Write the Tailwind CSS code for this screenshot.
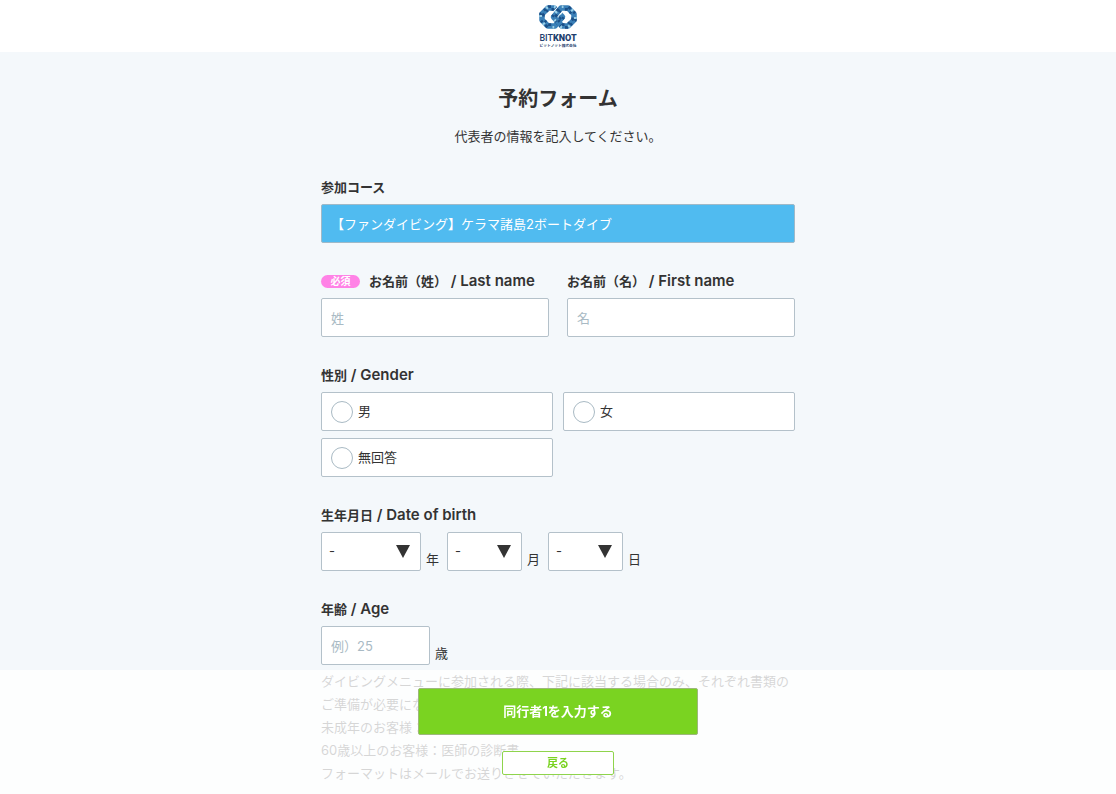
<!DOCTYPE html>
<html lang="ja">
  <head>
    <meta charset="UTF-8" />
    <meta name="viewport" content="width=device-width, initial-scale=1.0" />
    <script src="https://cdn.jsdelivr.net/npm/@tailwindcss/browser@4"></script>
    <title>予約フォーム</title>
  </head>
  <body class="min-h-screen bg-[#f4f8fb] font-[Inter,'Noto_Sans_CJK_JP',sans-serif] text-[13px] leading-[23px] text-[#333]">

    <header class="flex h-[52px] justify-center bg-white pt-1">
      <a href="#" aria-label="BITKNOT ビットノット株式会社">
        <svg class="h-11 w-10" viewBox="0 0 40 44">
          <!-- knot -->
          <g fill="none" stroke-linejoin="round">
            <path stroke="#3a80b8" stroke-width="5.500" d="M10 4 H16 L24.500 13 L17 22 H10 L4 16 V10 Z" />
            <path stroke="#1b4f87" stroke-width="2.800" stroke-dasharray="3 4 2 5" d="M10 2.700 H16.500 L26 13 L17.500 23.300 H9.500 L2.700 16.500 V9.500 Z" />
            <path stroke="#1b4f87" stroke-width="2.800" stroke-dasharray="2 5 3 3" stroke-dashoffset="4" d="M10.500 5.400 H15.500 L23 13 L16.500 20.600 H10.500 L5.400 15.500 V10.500 Z" />
            <path stroke="#9bd0e8" stroke-width="2.800" stroke-dasharray="2 9 2 7" stroke-dashoffset="5" d="M10 2.700 H16.500 L26 13 L17.500 23.300 H9.500 L2.700 16.500 V9.500 Z" />
            <path stroke="#fff" stroke-width="7.500" d="M15 13 L22 5.500" />
            <path stroke="#3a80b8" stroke-width="5.500" d="M30 22 H24 L15.500 13 L23 4 H30 L36 10 V16 Z" />
            <path stroke="#1b4f87" stroke-width="2.800" stroke-dasharray="3 4 2 5" d="M30 23.300 H23.500 L14 13 L22.500 2.700 H30.500 L37.300 9.500 V16.500 Z" />
            <path stroke="#1b4f87" stroke-width="2.800" stroke-dasharray="2 5 3 3" stroke-dashoffset="4" d="M29.500 20.600 H24.500 L17 13 L23.500 5.400 H29.500 L34.600 10.500 V15.500 Z" />
            <path stroke="#9bd0e8" stroke-width="2.800" stroke-dasharray="2 9 2 7" stroke-dashoffset="5" d="M30 23.300 H23.500 L14 13 L22.500 2.700 H30.500 L37.300 9.500 V16.500 Z" />
          </g>
          <text x="20" y="37" text-anchor="middle" fill="#1f3f6e" font-family="Roboto" font-size="9"><tspan font-weight="500">BIT</tspan><tspan font-weight="900">KNOT</tspan></text>
          <text x="20" y="43" text-anchor="middle" fill="#1f3f6e" font-family="Noto Sans CJK JP" font-weight="700" font-size="3.700">ビットノット株式会社</text>
        </svg>
      </a>
    </header>

    <main class="mx-auto max-w-[474px] pt-[33px]">
      <h1 class="text-center text-xl leading-7 font-bold">予約フォーム</h1>
      <p class="mt-3 text-center">代表者の情報を記入してください。</p>

      <form id="reserveForm" class="mt-7 flex flex-col gap-[27px]">
        <div>
          <label for="course" class="mb-[5px] block font-bold">参加コース</label>
          <input id="course" type="text" readonly value="【ファンダイビング】ケラマ諸島2ボートダイブ" class="block h-[39px] w-full rounded-xs border border-[#9fb9c8] bg-[#50bbf0] px-[9px] text-white" />
        </div>

        <div class="grid grid-cols-2 gap-[18px]">
          <div>
            <label for="lastName" class="mb-[5px] flex items-center gap-[9px] font-bold whitespace-nowrap">
              <span class="h-[13px] w-[39px] rounded-full bg-[#ff82e6] text-center text-[10px] leading-[13px] text-white">必須</span>
              <span>お名前（姓）<span class="text-[15px] leading-none font-semibold"> / Last name</span></span>
            </label>
            <input id="lastName" type="text" placeholder="姓" class="block h-[39px] w-full rounded-xs border border-[#b4c1ca] bg-white px-[9px] placeholder:text-[#a9bac4]" />
          </div>
          <div>
            <label for="firstName" class="mb-[5px] block font-bold whitespace-nowrap">お名前（名）<span class="text-[15px] leading-none font-semibold"> / First name</span></label>
            <input id="firstName" type="text" placeholder="名" class="block h-[39px] w-full rounded-xs border border-[#b4c1ca] bg-white px-[9px] placeholder:text-[#a9bac4]" />
          </div>
        </div>

        <fieldset>
          <legend class="mb-[5px] font-bold">性別<span class="text-[15px] leading-none font-semibold"> / Gender</span></legend>
          <div class="grid grid-cols-2 gap-x-[10px] gap-y-[7px]">
            <label class="flex h-[39px] items-center gap-[5px] rounded-xs border border-[#b4c1ca] bg-white px-[9px]">
              <input type="radio" name="gender" value="male" class="size-[22px] appearance-none rounded-full border border-[#a9bac4] bg-white checked:border-[6px] checked:border-[#50bbf0]" />
              男
            </label>
            <label class="flex h-[39px] items-center gap-[5px] rounded-xs border border-[#b4c1ca] bg-white px-[9px]">
              <input type="radio" name="gender" value="female" class="size-[22px] appearance-none rounded-full border border-[#a9bac4] bg-white checked:border-[6px] checked:border-[#50bbf0]" />
              女
            </label>
            <label class="flex h-[39px] items-center gap-[5px] rounded-xs border border-[#b4c1ca] bg-white px-[9px]">
              <input type="radio" name="gender" value="none" class="size-[22px] appearance-none rounded-full border border-[#a9bac4] bg-white checked:border-[6px] checked:border-[#50bbf0]" />
              無回答
            </label>
          </div>
        </fieldset>

        <fieldset>
          <legend class="mb-[5px] font-bold">生年月日<span class="text-[15px] leading-none font-semibold"> / Date of birth</span></legend>
          <div class="flex items-end">
            <div class="relative w-[100px]">
              <select id="year" class="block h-[39px] w-full appearance-none rounded-xs border border-[#b4c1ca] bg-white px-[7px]">
                <option>-</option>
              </select>
              <svg class="pointer-events-none absolute top-[13px] right-[11px] h-[13px] w-[14px]" viewBox="0 0 14 13" fill="#333"><path d="M0 0h14L7 13z" /></svg>
            </div>
            <label for="year" class="mr-2 ml-[5px]">年</label>
            <div class="relative w-[75px]">
              <select id="month" class="block h-[39px] w-full appearance-none rounded-xs border border-[#b4c1ca] bg-white px-[7px]">
                <option>-</option>
              </select>
              <svg class="pointer-events-none absolute top-[13px] right-[11px] h-[13px] w-[14px]" viewBox="0 0 14 13" fill="#333"><path d="M0 0h14L7 13z" /></svg>
            </div>
            <label for="month" class="mr-2 ml-[5px]">月</label>
            <div class="relative w-[75px]">
              <select id="day" class="block h-[39px] w-full appearance-none rounded-xs border border-[#b4c1ca] bg-white px-[7px]">
                <option>-</option>
              </select>
              <svg class="pointer-events-none absolute top-[13px] right-[11px] h-[13px] w-[14px]" viewBox="0 0 14 13" fill="#333"><path d="M0 0h14L7 13z" /></svg>
            </div>
            <label for="day" class="ml-[5px]">日</label>
          </div>
        </fieldset>

        <div>
          <label for="age" class="mb-[5px] block font-bold">年齢<span class="text-[15px] leading-none font-semibold"> / Age</span></label>
          <div class="flex items-end gap-[5px]">
            <input id="age" type="text" inputmode="numeric" placeholder="例）25" class="block h-[39px] w-[109px] rounded-xs border border-[#b4c1ca] bg-white px-[9px] placeholder:text-[#a9bac4]" />
            <span>歳</span>
          </div>
          <p class="mt-[5px]">
            ダイビングメニューに参加される際、下記に該当する場合のみ、それぞれ書類のご準備が必要になります。<br />
            未成年のお客様：親権者同意書<br />
            60歳以上のお客様：医師の診断書<br />
            フォーマットはメールでお送りさせていただきます。
          </p>
        </div>
      </form>
    </main>

    <!-- fixed footer buttons -->
    <div class="fixed inset-x-0 bottom-0 flex flex-col items-center gap-4 bg-white/80 pt-[18px] pb-[19px]">
      <button type="submit" form="reserveForm" class="h-[47px] w-[280px] rounded-xs border border-[#9db77c] bg-[#7ad321] font-bold text-white">同行者1を入力する</button>
      <button type="button" class="h-6 w-28 rounded-xs border border-[#8fd44c] bg-white text-[11px] leading-4 font-bold text-[#7ad321]">戻る</button>
    </div>

  </body>
</html>
